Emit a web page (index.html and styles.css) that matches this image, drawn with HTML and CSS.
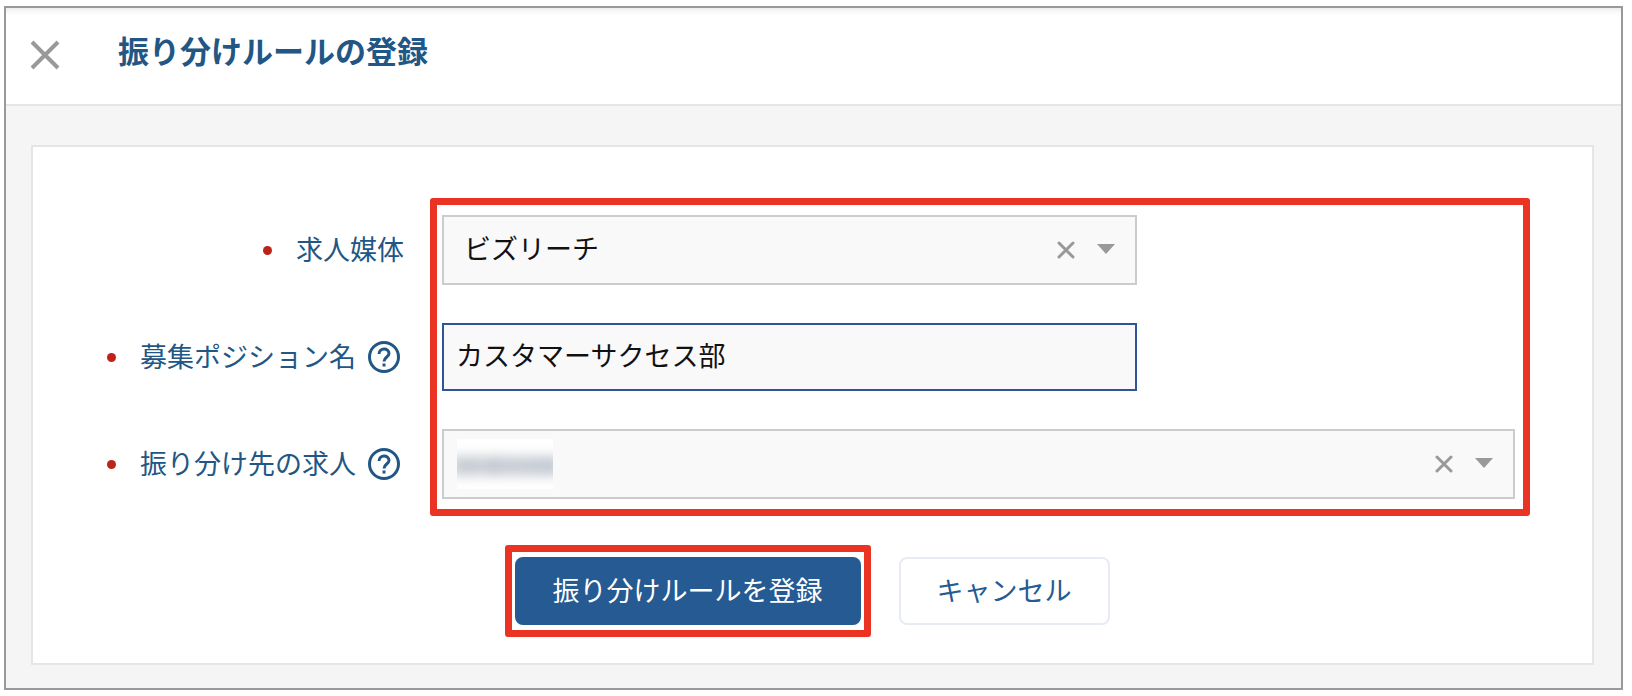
FILE: index.html
```html
<!DOCTYPE html>
<html lang="ja">

<head>
    <meta charset="UTF-8">
    <meta name="viewport" content="width=device-width, initial-scale=1.0">
    <title>振り分けルールの登録</title>
    <link rel="stylesheet" href="styles.css">
</head>

<body>

    <div class="modal">
        <header class="modal-header">
            <button type="button" class="icon-btn" aria-label="閉じる">
                <svg width="30" height="30" viewBox="0 0 30 30">
                    <path d="M2 2L28 28M28 2L2 28" stroke="#999" stroke-width="4" />
                </svg>
            </button>
            <h1>振り分けルールの登録</h1>
        </header>

        <main class="modal-body">
            <form class="card">
                <div class="fields">
                    <div class="field-label row1">
                        <label for="media">求人媒体</label>
                    </div>
                    <div class="field select-box short row1">
                        <select id="media">
                            <option>ビズリーチ</option>
                        </select>
                        <button type="button" class="icon-btn clear" aria-label="クリア">
                            <svg width="18" height="18" viewBox="0 0 18 18">
                                <path d="M2 2L16 16M16 2L2 16" stroke="#999" stroke-width="3" stroke-linecap="round" />
                            </svg>
                        </button>
                    </div>

                    <div class="field-label row2">
                        <label for="position">募集ポジション名</label>
                        <button type="button" class="icon-btn help" aria-label="ヘルプ">
                            <svg width="32" height="32" viewBox="0 0 32 32" fill="none" stroke="#215685" stroke-width="3">
                                <circle cx="16" cy="16" r="14.5" />
                                <path d="M11 13C11 6.400 21 6.400 21 12.600C21 16 16 16.200 16 20.500" />
                                <path d="M16 22.500V25.500" />
                            </svg>
                        </button>
                    </div>
                    <input type="text" id="position" class="field short row2" value="カスタマーサクセス部">

                    <div class="field-label row3">
                        <label for="job">振り分け先の求人</label>
                        <button type="button" class="icon-btn help" aria-label="ヘルプ">
                            <svg width="32" height="32" viewBox="0 0 32 32" fill="none" stroke="#215685" stroke-width="3">
                                <circle cx="16" cy="16" r="14.5" />
                                <path d="M11 13C11 6.400 21 6.400 21 12.600C21 16 16 16.200 16 20.500" />
                                <path d="M16 22.500V25.500" />
                            </svg>
                        </button>
                    </div>
                    <div class="field select-box row3">
                        <select id="job">
                            <option></option>
                        </select>
                        <span class="masked"></span>
                        <button type="button" class="icon-btn clear" aria-label="クリア">
                            <svg width="18" height="18" viewBox="0 0 18 18">
                                <path d="M2 2L16 16M16 2L2 16" stroke="#999" stroke-width="3" stroke-linecap="round" />
                            </svg>
                        </button>
                    </div>

                    <div class="highlight"></div>
                </div>

                <div class="actions">
                    <div class="highlight-btn">
                        <button type="submit" class="btn btn-primary">振り分けルールを登録</button>
                    </div>
                    <button type="button" class="btn">キャンセル</button>
                </div>
            </form>
        </main>
    </div>

</body>

</html>
```

FILE: styles.css
```css
* {
    box-sizing: border-box;
}

body {
    margin: 6px 9px 7px 4px;
    background-color: #fff;
    color: #111;
    font-family: "Noto Sans CJK JP", sans-serif;
    font-size: 27px;
    line-height: 40px;
}

.modal {
    display: flex;
    flex-direction: column;
    min-height: calc(100vh - 13px);
    border: 2px solid #999;
    background-color: #f5f5f5;
}

.modal-header {
    display: flex;
    align-items: flex-end;
    gap: 58px;
    padding: 24px 24px 34px;
    border-bottom: 2px solid #e5e5e5;
    background-color: #fff;
    box-shadow: inset 0 8px 8px -8px rgba(0, 0, 0, 0.15);
}

h1 {
    margin: 0;
    padding-bottom: 2px;
    color: #215685;
    font-size: 31px;
    font-weight: bold;
    line-height: 36px;
}

.icon-btn {
    display: flex;
    padding: 0;
    border: none;
    background: none;
    cursor: pointer;
}

.modal-body {
    display: flex;
    flex: 1;
    flex-direction: column;
    padding: 39px 27px 23px 25px;
}

.card {
    flex: 1;
    padding: 68px 77px 26px 0;
    border: 2px solid #e5e5e5;
    background-color: #fff;
}

.fields {
    display: grid;
    grid-template-columns: 371px 1fr;
    gap: 38px;
}

.field {
    grid-column: 2;
}

.row1 {
    grid-row: 1;
}

.row2 {
    grid-row: 2;
}

.row3 {
    grid-row: 3;
}

.field-label {
    display: flex;
    grid-column: 1;
    align-items: center;
    justify-content: flex-end;
    gap: 8px;
    color: #215685;
}

.field-label label {
    padding-bottom: 3px;
}

/* Red dot for required fields */
.field-label::before {
    content: "";
    width: 9px;
    height: 9px;
    margin-right: 16px;
    border-radius: 50%;
    background-color: #bd2318;
}

.help {
    padding: 4px;
}

.short {
    max-width: 695px;
}

.select-box {
    position: relative;
}

/* Dropdown arrow */
.select-box::after {
    content: "";
    position: absolute;
    top: 29px;
    right: 22px;
    border-top: 10px solid #999;
    border-right: 9px solid transparent;
    border-left: 9px solid transparent;
    pointer-events: none;
}

select,
input {
    width: 100%;
    height: 70px;
    padding: 0 100px 4px 20px;
    border: 2px solid #ccc;
    border-radius: 0;
    background-color: #f9f9f9;
    color: #111;
    font: inherit;
    appearance: none;
}

input {
    height: 68px;
    padding: 0 12px 6px;
    border-color: #2f5597;
    outline: none;
}

.clear {
    position: absolute;
    top: 26px;
    right: 62px;
}

/* Hidden value */
.masked {
    position: absolute;
    top: 10px;
    left: 15px;
    width: 96px;
    height: 50px;
    overflow: hidden;
    background-color: #fff;
}

.masked::before {
    content: "";
    position: absolute;
    top: 17px;
    left: -8px;
    width: 112px;
    height: 20px;
    background: linear-gradient(90deg, #d0d3d8, #c4c9d1 22%, #d3d6db 29%, #c0c6cf 38%, #cbcfd6 50%, #c4cad3);
    filter: blur(6px);
}

/* Red frames around the places to fill in and press */
.highlight {
    grid-column: 2;
    grid-row: 1 / 4;
    margin: -17px -15px -17px -12px;
    border: 7px solid #ea3323;
    border-radius: 3px;
    pointer-events: none;
    z-index: 1;
}

.actions {
    display: flex;
    align-items: center;
    justify-content: center;
    gap: 28px;
    margin-top: 46px;
    padding-left: 66px;
}

.highlight-btn {
    padding: 5px 3px;
    border: 7px solid #ea3323;
    border-radius: 3px;
}

.btn {
    height: 68px;
    padding: 0 36px 3px;
    border: 2px solid #e6ebf4;
    border-radius: 8px;
    background-color: #fff;
    color: #255a92;
    font: inherit;
    cursor: pointer;
}

.btn-primary {
    border-color: #255a92;
    background-color: #255a92;
    color: #fff;
}
```
